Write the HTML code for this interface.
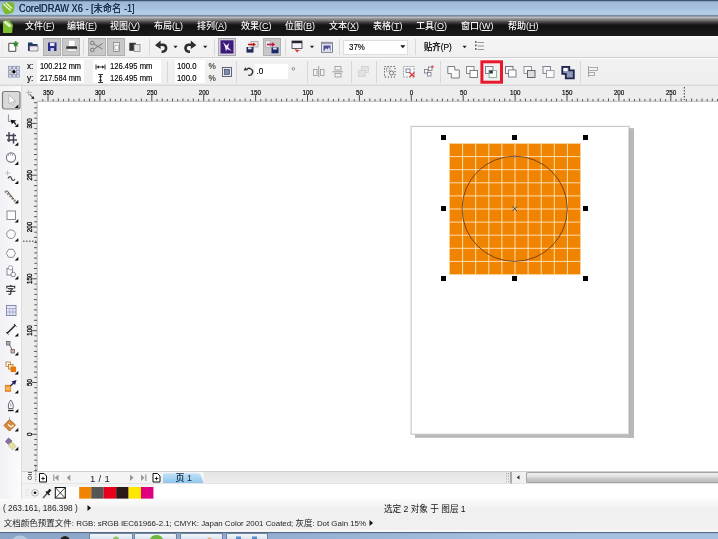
<!DOCTYPE html>
<html><head><meta charset="utf-8">
<title>CorelDRAW X6</title>
<style>
html,body{margin:0;padding:0;background:#fff;}
body{width:718px;height:539px;overflow:hidden;position:relative;will-change:transform;font-family:"Liberation Sans","Noto Sans CJK SC",sans-serif;font-size:9px;color:#222;}
.a{position:absolute;}
svg{position:absolute;overflow:visible;}
#title{left:0;top:0;width:718px;height:16px;background:linear-gradient(#3d5474 0,#6c88a8 1px,#9eb9d6 2px,#a6c1de 8px,#b6d0ea 14px,#a4bcd6 15px,#4c5c72 16px);}
#title .edge{left:0;top:0;width:718px;height:1px;background:#3d5474;}
#title .t{left:19px;top:1px;font-size:10.5px;color:#172e4c;text-shadow:0 0 0.4px #172e4c;line-height:14px;white-space:nowrap;transform-origin:0 0;transform:scaleX(0.88);}
#menu{left:0;top:16px;width:718px;height:20px;background:linear-gradient(#56657a 0,#d4d4d4 1px,#a2a2a2 2px,#7a7a7a 4px,#474747 6px,#1c1c1c 8.5px,#121212 10px,#1a1a1a 19px,#1a1a1a 20px);}
#menu span{position:absolute;top:4.3px;font-size:9px;color:#fafafa;line-height:13px;white-space:nowrap;font-weight:500;}
#tb1{left:0;top:36px;width:718px;height:21px;background:linear-gradient(#fdfdfd 0,#f4f4f4 3px,#f0f0f0 100%);}
#tb1line{left:0;top:57px;width:718px;height:1px;background:#d2d2d2;}
#tb2{left:0;top:58px;width:718px;height:28px;background:linear-gradient(#fbfbfb 0,#f1f1f1 2px,#eeeeee 26px,#d8d8d8 27.5px,#e4e4e4 28px);}
#toolbox{left:0;top:86px;width:21px;height:414px;background:linear-gradient(90deg,#f1f1f6,#fcfcfc);border-right:1px solid #dcdcdc;}
#hruler{left:22px;top:86px;width:696px;height:16px;background:#ededed;}
#vruler{left:22px;top:101px;width:16px;height:371px;background:#ededed;}
#canvas{left:37.5px;top:101.5px;width:681px;height:370px;background:#fff;overflow:hidden;}
#nav{left:22px;top:472px;width:696px;height:12px;background:#f4f4f4;}
#pal{left:22px;top:484px;width:696px;height:15px;background:#fff;}
#status{left:0;top:499px;width:718px;height:32px;background:linear-gradient(#fbfbfb 0,#f6f6f6 5px,#f0f0f0 9px,#f0f0f0 29px,#f4ecec 30px,#f8f8f8 31px);}
#task{left:0;top:531px;width:718px;height:8px;background:linear-gradient(#f4f4f4 0,#f4f4f4 0.8px,#5a6c86 1.2px,#5a6c86 2px,rgba(120,150,190,0) 2.6px),linear-gradient(90deg,#8ba6c8 0,#93aed0 270px,#a4bfdf 500px,#a6c1e0 718px);}
.btn{position:absolute;top:38px;height:15.6px;width:15.8px;background:#c8c8c8;border:1px solid #b0b0b0;box-sizing:content-box;}
.sep{position:absolute;width:1px;background:#d8d8d8;}
.inp{position:absolute;background:#fff;}
.pt{position:absolute;font-size:8.2px;line-height:10px;color:#161616;white-space:nowrap;text-shadow:0 0 0.35px rgba(0,0,0,.6);}
.sx{transform-origin:0 50%;}
.sw{position:absolute;top:3px;height:12px;width:12.4px;}
.tbtn{position:absolute;height:7px;background:linear-gradient(#f2f6fa,#d6e2ef);border:1px solid #6f839b;border-bottom:none;border-radius:2px 2px 0 0;box-sizing:border-box;}
</style></head>
<body>
<div id="title" class="a"><div class="a edge"></div>
<svg style="left:1px;top:1px" width="16" height="15" viewBox="0 0 16 15"><path d="M1.500 2.500Q6 0 12.500 1.500Q14.500 6 12 11.500Q8 14 4 13Q0 8 1.500 2.500Z" fill="#7dbb2c"/><path d="M2.500 3l7 6.500M5 2l6 5.500" stroke="#eef8d0" stroke-width="1.400" fill="none"/></svg>
<div class="a t">CorelDRAW X6 - [未命名 -1]</div></div>
<div id="menu" class="a">
<svg style="left:2px;top:3px" width="12" height="15" viewBox="0 0 12 15"><path d="M1 2 L7 1 L11 6 L10 14 L1 14 Z" fill="#7cc030"/><path d="M2 3 L8 8 M3 2 L9 7" stroke="#f0f8e0" stroke-width="1.2"/></svg>
<span style="left:25px">文件(<u>F</u>)</span>
<span style="left:67px">编辑(<u>E</u>)</span>
<span style="left:110px">视图(<u>V</u>)</span>
<span style="left:154px">布局(<u>L</u>)</span>
<span style="left:197px">排列(<u>A</u>)</span>
<span style="left:241px">效果(<u>C</u>)</span>
<span style="left:285px">位图(<u>B</u>)</span>
<span style="left:329px">文本(<u>X</u>)</span>
<span style="left:373px">表格(<u>T</u>)</span>
<span style="left:416px">工具(<u>O</u>)</span>
<span style="left:461px">窗口(<u>W</u>)</span>
<span style="left:508px">帮助(<u>H</u>)</span>
</div>
<div id="tb1" class="a"></div><div id="tb1line" class="a"></div><div id="tb2" class="a"></div>
<div class="btn" style="left:43px"></div>
<div class="btn" style="left:62px"></div>
<div class="btn" style="left:88px"></div>
<div class="btn" style="left:107px"></div>
<div class="btn" style="left:263px"></div>
<div class="sep" style="left:83px;top:39px;height:16px"></div>
<div class="sep" style="left:149px;top:39px;height:16px"></div>
<div class="sep" style="left:214px;top:39px;height:16px"></div>
<div class="sep" style="left:285px;top:39px;height:16px"></div>
<div class="sep" style="left:339px;top:39px;height:16px"></div>
<div class="sep" style="left:415px;top:39px;height:16px"></div>
<div class="inp" style="left:343px;top:40px;width:65px;height:15px;border:1px solid #dedede;box-sizing:border-box"></div>
<div class="pt sx" style="left:349px;top:42px;font-size:9px;transform:scaleX(.88)">37%</div>
<div class="pt sx" style="left:424px;top:41px;font-size:9px;line-height:12px;color:#111;font-weight:500;transform:scaleX(.93)">贴齐(P)</div><svg style="left:0;top:0" width="718" height="539" viewBox="0 0 718 539"><path d="M2.500 39v16" stroke="#e2e2ea" stroke-width="1" stroke-dasharray="1 1"/><path d="M8.8 43.3h4.2l2.800 2.500v5.500h-7z" fill="#fff" stroke="#4a4a4a" stroke-width="1"/><path d="M15.800 41l.8 1.800l1.900.2l-1.400 1.300l.4 1.900l-1.700-1l-1.700 1l.4-1.900l-1.400-1.300l1.900-.2z" fill="#2c8a2c" stroke="#2c8a2c" stroke-width="0.600"/><path d="M28 42.5h4l1 1.5h4.5v7h-9.5z" fill="#1f3766"/><path d="M29.5 46h8.5v5h-8.5z" fill="#e8e8f0" stroke="#555" stroke-width="0.6"/><rect x="48" y="42.5" width="8.5" height="8.5" fill="#2b2b8a"/><rect x="50" y="43" width="4.5" height="3" fill="#e8e8ff"/><rect x="50.5" y="48" width="3.5" height="3" fill="#c8c8e8"/><rect x="69" y="40.8" width="5.5" height="5.5" fill="#fff"/><rect x="66.3" y="46.3" width="10.7" height="2.6" fill="#333"/><rect x="67" y="49" width="9.4" height="2.3" fill="#f4f4f4" stroke="#999" stroke-width="0.4"/><g stroke="#7a7a7a" stroke-width="1" fill="none"><circle cx="92.3" cy="43" r="1.8"/><circle cx="92.3" cy="50" r="1.8"/><path d="M94 44l8.5 5M94 49l8.5-5.5"/></g><rect x="113.5" y="42.5" width="6" height="9" fill="#eee" stroke="#888" stroke-width="0.8"/><rect x="115" y="45.5" width="3.6" height="4.4" fill="#fff" stroke="#999" stroke-width="0.6"/><rect x="129.3" y="42.8" width="6.5" height="8" fill="#333"/><rect x="134" y="44.5" width="6" height="7" fill="#e4e4e4" stroke="#777" stroke-width="0.7"/><path d="M155 45.3l5.6-4.8v3h2.2c3 0 4.6 2 4.6 4.6s-1.8 4.8-4.8 4.8h-1v-2.4h0.8c1.600 0 2.300-1 2.300-2.400s-.8-2.200-2.300-2.200h-1.800v3.200z" fill="#2e2e2e"/><path d="M173.400 45.800h4.200l-2.100 2.400z" fill="#222"/><path d="M196.400 45.300l-5.600-4.800v3h-2c-3 0-4.600 2-4.600 4.600s1.800 4.800 4.800 4.800h1v-2.400h-.8c-1.600 0-2.300-1-2.300-2.400s.8-2.200 2.300-2.200h1.600v3.200z" fill="#2e2e2e"/><path d="M203.100 45.800h4.200l-2.100 2.400z" fill="#222"/><rect x="218.500" y="38.500" width="17" height="17" fill="#d5d0dc" stroke="#a8a4b0" stroke-width="1"/><rect x="220.500" y="40.300" width="13" height="13.200" fill="#3b1a7a"/><path d="M223 42l3.500 3.500l3-2.500l-1.500 4l3.500 4l-4.500-2l-1 2.500l-1-4.500z" fill="#f2e8ff"/><rect x="251" y="41.500" width="7" height="5.500" fill="#e8e8e8" stroke="#888" stroke-width="0.6"/><rect x="246.500" y="47" width="7" height="5.600" fill="#1f2a5a"/><rect x="248" y="47.300" width="3.600" height="2" fill="#dde"/><path d="M248 44.500h6" stroke="#c01818" stroke-width="1.600"/><path d="M253 42.500l3 2l-3 2z" fill="#c01818"/><rect x="265.500" y="40.500" width="5" height="7" fill="#e4e4e4" stroke="#999" stroke-width="0.5"/><rect x="271.500" y="47.300" width="7" height="6" fill="#1f2a6a"/><rect x="273" y="47.500" width="3.800" height="2" fill="#dde"/><path d="M267 44.500h6" stroke="#c01840" stroke-width="1.600"/><path d="M272 42.300l3.200 2.200l-3.200 2.200z" fill="#c01840"/><rect x="292" y="41" width="10" height="7.500" fill="#f2f2f8" stroke="#334" stroke-width="0.800"/><rect x="292" y="41" width="10" height="2.200" fill="#223"/><path d="M294.500 49l2.800 3.800l0.700-1.800l2.500-.5z" fill="#e0301c"/><path d="M309.900 45.800h4.200l-2.100 2.400z" fill="#222"/><rect x="321.500" y="42.300" width="11" height="10" fill="#e8e8f4" stroke="#667" stroke-width="0.800"/><rect x="321.500" y="42.300" width="11" height="1.800" fill="#99a"/><rect x="323.500" y="45.500" width="7" height="5.500" fill="#4a4a9a"/><path d="M324 51l2-3l1.500 1.500l1.500-2.500l1.500 4z" fill="#dde"/><path d="M400.300 45.300h5l-2.500 2.900z" fill="#111"/><path d="M462.500 45.800h4.200l-2.100 2.400z" fill="#222"/><g stroke="#8a8a8a" stroke-width="0.9"><path d="M477.500 42.500h6.500M477.500 46h6.500M477.500 49.500h6.500"/><path d="M475.800 41v10" stroke-dasharray="1.800 1.700" stroke="#555" stroke-width="1.500"/></g></svg>
<div class="pt" style="left:27px;top:62px">x:</div><div class="pt" style="left:27px;top:73.500px">y:</div>
<div class="inp" style="left:37px;top:60px;width:47px;height:23px"></div>
<div class="pt sx" style="left:40px;top:62px;transform:scaleX(.9)">100.212 mm</div><div class="pt sx" style="left:40px;top:73.500px;transform:scaleX(.9)">217.584 mm</div>
<div class="inp" style="left:92.500px;top:60px;width:68.500px;height:23px"></div>
<div class="pt sx" style="left:109.700px;top:62px;transform:scaleX(.93)">126.495 mm</div><div class="pt sx" style="left:109.700px;top:73.500px;transform:scaleX(.93)">126.495 mm</div>
<div class="sep" style="left:167px;top:61px;height:22px"></div>
<div class="inp" style="left:175px;top:60px;width:30px;height:23px"></div>
<div class="pt sx" style="left:177px;top:62px;transform:scaleX(.95)">100.0</div><div class="pt sx" style="left:177px;top:73.500px;transform:scaleX(.95)">100.0</div>
<div class="pt" style="left:208.500px;top:61.500px;color:#555">%</div><div class="pt" style="left:208.500px;top:73.500px;color:#555">%</div>
<div class="sep" style="left:236px;top:61px;height:22px"></div>
<div class="inp" style="left:255px;top:64px;width:32.500px;height:15px"></div>
<div class="pt" style="left:256.500px;top:66.500px">.0</div>
<div class="sep" style="left:307px;top:61px;height:22px"></div>
<div class="sep" style="left:351px;top:61px;height:22px"></div>
<div class="sep" style="left:376px;top:61px;height:22px"></div>
<div class="sep" style="left:440px;top:61px;height:22px"></div>
<div class="sep" style="left:580px;top:61px;height:22px"></div><svg style="left:0;top:0" width="718" height="539" viewBox="0 0 718 539"><rect x="8.5" y="66.3" width="2.800" height="2.800" fill="#dfe0ee" stroke="#8088ac" stroke-width="0.700"/><rect x="8.5" y="70.3" width="2.800" height="2.800" fill="#dfe0ee" stroke="#8088ac" stroke-width="0.700"/><rect x="8.5" y="74.3" width="2.800" height="2.800" fill="#dfe0ee" stroke="#8088ac" stroke-width="0.700"/><rect x="12.5" y="66.3" width="2.800" height="2.800" fill="#dfe0ee" stroke="#8088ac" stroke-width="0.700"/><circle cx="13.9" cy="71.7" r="1.700" fill="#000"/><rect x="12.5" y="74.3" width="2.800" height="2.800" fill="#dfe0ee" stroke="#8088ac" stroke-width="0.700"/><rect x="16.5" y="66.3" width="2.800" height="2.800" fill="#dfe0ee" stroke="#8088ac" stroke-width="0.700"/><rect x="16.5" y="70.3" width="2.800" height="2.800" fill="#dfe0ee" stroke="#8088ac" stroke-width="0.700"/><rect x="16.5" y="74.3" width="2.800" height="2.800" fill="#dfe0ee" stroke="#8088ac" stroke-width="0.700"/><path d="M96 64.500v5M105 64.500v5M96.500 67h8" stroke="#222" stroke-width="0.900" fill="none"/><path d="M97 67l2-1.700v3.400zM104 67l-2-1.700v3.400z" fill="#222"/><path d="M98 74.500h5M98 82.500h5M100.500 75v7" stroke="#222" stroke-width="0.900" fill="none"/><path d="M100.500 75l-1.700 2.200h3.400zM100.500 82l-1.700-2.200h3.400z" fill="#222"/><rect x="222.500" y="67.500" width="9" height="9" fill="#e8e8f4" stroke="#556" stroke-width="0.900"/><rect x="224.500" y="69.500" width="5" height="5" fill="#8088b8" stroke="#334" stroke-width="0.600"/><path d="M246.500 69.800a3.400 3.400 0 1 1 1.500 5.200" fill="none" stroke="#333" stroke-width="1.300"/><path d="M243.600 70.500l4.200-0.200l-2.600-3z" fill="#333"/><circle cx="293.300" cy="68.800" r="1.300" fill="none" stroke="#555" stroke-width="0.600"/><g fill="#f2f2f2" stroke="#999" stroke-width="0.800"><rect x="313.500" y="69.500" width="3.500" height="6"/><rect x="320.500" y="69.500" width="3.500" height="6"/><path d="M318.700 66v11" stroke="#888"/></g><g fill="#f2f2f2" stroke="#999" stroke-width="0.800"><rect x="335" y="66.500" width="6" height="3.500"/><rect x="335" y="73.500" width="6" height="3.500"/><path d="M332.500 71.800h10.500" stroke="#888"/></g><g fill="#e2e2e2" stroke="#d0d0d0" stroke-width="0.800"><rect x="361.500" y="66.500" width="7" height="6"/><rect x="358.500" y="70.500" width="7" height="6"/></g><rect x="384.500" y="66.500" width="10.500" height="10.500" fill="none" stroke="#444" stroke-width="1" stroke-dasharray="1.200 1.800"/><rect x="386.500" y="68" width="3.500" height="3" fill="#f4f4f4" stroke="#888" stroke-width="0.600"/><circle cx="391.500" cy="73" r="2" fill="#f8f8f8" stroke="#555" stroke-width="0.800"/><rect x="403.500" y="66.500" width="10.500" height="10.500" fill="#f4f8f8" stroke="#7a9a8a" stroke-width="0.800" stroke-dasharray="2 1"/><rect x="406" y="69" width="4" height="3.500" fill="#fafafa" stroke="#557" stroke-width="0.700"/><path d="M409.500 72.500l5 4.500m0-4.500l-5 4.500" stroke="#e03030" stroke-width="1.200"/><g fill="#fafafa" stroke="#667" stroke-width="0.700"><rect x="424.500" y="69.500" width="3.500" height="3.500"/><rect x="428.500" y="67" width="3.500" height="3.500"/><rect x="427.500" y="72.500" width="3.500" height="3.500"/></g><circle cx="432.500" cy="66.800" r="1.200" fill="#e05050"/><path d="M447.8 66.5h7v3.500h4.500v8h-8v-4.500h-3.500z" fill="#fafafa" stroke="#707070" stroke-width="0.900"/><rect x="466.5" y="66.5" width="7.500" height="7" fill="#fafafa" stroke="#808080" stroke-width="0.900"/><rect x="470.0" y="70.5" width="7.500" height="7" fill="#fff" stroke="#707070" stroke-width="0.900"/><rect x="485.5" y="66.5" width="7.500" height="7" fill="#f4f4fa" stroke="#778" stroke-width="0.900"/><rect x="489.0" y="70.5" width="7.500" height="7" fill="#f4faf4" stroke="#8a9" stroke-width="0.900"/><rect x="489.3" y="70.5" width="3.500" height="3" fill="#334"/><rect x="505.5" y="66.5" width="7.500" height="7" fill="#fafafa" stroke="#667" stroke-width="0.900"/><rect x="508.5" y="70.0" width="7.500" height="7" fill="#fff" stroke="#778" stroke-width="0.900"/><rect x="524.0" y="66.5" width="7.500" height="7" fill="#fafafa" stroke="#889" stroke-width="0.900"/><rect x="527.5" y="70.5" width="7.500" height="7" fill="#ddd" stroke="#556" stroke-width="0.900"/><rect x="543.0" y="66.5" width="7.500" height="7" fill="#f4f4f4" stroke="#778" stroke-width="0.900"/><rect x="546.5" y="70.5" width="7.500" height="7" fill="#fafafa" stroke="#99a" stroke-width="0.900"/><path d="M562.3 66.8h7v3.500h4.500v8h-8v-4.500h-3.500z" fill="#9098b8" stroke="#1c2450" stroke-width="1.800"/><rect x="563.5" y="68.0" width="4" height="3" fill="#fff"/><rect x="481.900" y="61.800" width="19.600" height="20.400" fill="none" stroke="#e8182c" stroke-width="3"/><g fill="#f2f2f2" stroke="#999" stroke-width="0.800"><path d="M588.500 66v11" /><rect x="588.500" y="67.500" width="9" height="3"/><rect x="588.500" y="72.500" width="6" height="3"/></g></svg>
<div id="toolbox" class="a"></div>
<div class="a" style="left:5.500px;top:283.500px;font-size:10.500px;line-height:13px;color:#444;font-weight:bold">字</div><svg style="left:0;top:0" width="718" height="539" viewBox="0 0 718 539"><rect x="2.500" y="91.500" width="17.500" height="17.500" rx="2" fill="#dadada" stroke="#7c7c7c" stroke-width="1.200"/><path d="M9 95v9l2.200-2l1.600 3.400l1.400-.7l-1.600-3.300h3z" fill="#fff" stroke="#aaa" stroke-width="0.700"/><path d="M18.300 104.5v3.600h-3.600z" fill="#111"/><path d="M8.500 114.500v7l3 0" stroke="#99a" stroke-width="1.200" fill="none"/><path d="M10.500 119.800l6 .6l-2 1.400l2 2.400l-1 .8l-2-2.400l-1.600 1.600z" fill="#111"/><path d="M18.300 123.5v3.600h-3.600z" fill="#111"/><path d="M9 132v10M13.500 133.500v10M6 135.500h10M7 140h10" stroke="#445" stroke-width="1.500" fill="none"/><path d="M18.300 142.2v3.600h-3.600z" fill="#111"/><circle cx="11" cy="157.500" r="4.600" fill="#fdfdff" stroke="#778" stroke-width="1.100"/><path d="M8.500 156v-2.500M10.500 155.500v-3M12.500 156v-2.500" stroke="#99a" stroke-width="0.800"/><path d="M18.300 161.3v3.600h-3.600z" fill="#111"/><path d="M7.500 170.500v5M5 173h5" stroke="#bbb" stroke-width="0.900"/><path d="M8 178.500c1.500-3 3-2 3.500 0s2 3 3.500 .5" stroke="#445" stroke-width="1.200" fill="none"/><path d="M18.300 180.5v3.600h-3.600z" fill="#111"/><path d="M5 191l10.500 10.500" stroke="#9a8878" stroke-width="2.400" stroke-dasharray="2 1.200"/><path d="M7 190.500l7 9" stroke="#555" stroke-width="1" /><path d="M18.300 199.8v3.600h-3.600z" fill="#111"/><rect x="7" y="211" width="8.500" height="8.500" fill="#fff" stroke="#8a8a90" stroke-width="1"/><path d="M18.300 219.0v3.600h-3.600z" fill="#111"/><circle cx="11" cy="234.200" r="4.300" fill="#fff" stroke="#8a8a90" stroke-width="1"/><path d="M18.300 238.0v3.600h-3.600z" fill="#111"/><path d="M6.300 253.300l2.300-4h4.600l2.300 4l-2.300 4h-4.600z" fill="#fff" stroke="#8a8a90" stroke-width="1"/><path d="M18.300 257.0v3.600h-3.600z" fill="#111"/><rect x="7" y="268.500" width="5.500" height="6.500" fill="#fff" stroke="#778" stroke-width="0.900"/><circle cx="10.500" cy="267.800" r="2.200" fill="#fff" stroke="#889" stroke-width="0.800"/><circle cx="13.200" cy="274.500" r="2.300" fill="#fff" stroke="#667" stroke-width="0.800"/><path d="M18.300 276.0v3.600h-3.600z" fill="#111"/><rect x="6.500" y="305.500" width="9.500" height="10" fill="#e8e8f6" stroke="#7880a8" stroke-width="0.900"/><path d="M6.500 308.500h9.500M9.700 308.500v7M12.800 308.500v7M6.500 312h9.500" stroke="#9098c0" stroke-width="0.700"/><path d="M7 333.500l8.500-8.500" stroke="#333" stroke-width="1.700"/><path d="M6 332l2.500 2.500M14 324l2.500 2.500" stroke="#333" stroke-width="1"/><path d="M18.300 333.0v3.600h-3.600z" fill="#111"/><rect x="6.500" y="341.500" width="3.500" height="3.500" fill="#aaa" stroke="#667" stroke-width="0.800"/><rect x="11" y="349.500" width="3.500" height="3.500" fill="#c8b8b0" stroke="#766" stroke-width="0.800"/><path d="M9.500 345l2.500 4.500" stroke="#666" stroke-width="1"/><path d="M18.300 352.0v3.600h-3.600z" fill="#111"/><rect x="6" y="362" width="4.500" height="4.500" fill="#fff" stroke="#b07830" stroke-width="0.800"/><rect x="8.500" y="364.500" width="4.500" height="4.500" fill="#fce0b0" stroke="#c07820" stroke-width="0.800"/><rect x="11" y="367" width="4.800" height="4.800" fill="#f07800" stroke="#d06800" stroke-width="0.600"/><path d="M18.300 371.0v3.600h-3.600z" fill="#111"/><rect x="5.200" y="385.200" width="5.600" height="6.200" fill="#f09020" stroke="#d07810" stroke-width="0.600"/><path d="M7 387v3M9 387v3" stroke="#fff" stroke-width="0.700"/><path d="M16.500 380l-5 1.500l3.500 3.500z" fill="#1c1c6a"/><path d="M10.500 386l3-3" stroke="#223" stroke-width="1.200"/><path d="M18.300 390.0v3.600h-3.600z" fill="#111"/><path d="M10.800 400c-2 2.500-2.800 5-2.300 8.500h4.600c.5-3.500-.3-6-2.300-8.500z" fill="#fff" stroke="#556" stroke-width="0.900"/><path d="M8 410.500h5.600" stroke="#222" stroke-width="1.400"/><path d="M10.800 403v4" stroke="#889" stroke-width="0.700"/><path d="M18.300 408.8v3.600h-3.600z" fill="#111"/><path d="M9.500 419.500l6 5.500l-6 6l-5.500-5.500z" fill="#d88838" stroke="#a86020" stroke-width="0.900"/><path d="M8 424.500l3 2.500l2.500-2" stroke="#fff" stroke-width="1.100" fill="none"/><path d="M9.500 417v4" stroke="#99a" stroke-width="0.800"/><path d="M18.300 427.8v3.600h-3.600z" fill="#111"/><path d="M8.500 438l3.500 3l-3.500 3.500l-3-3z" fill="#8870a0" stroke="#665080" stroke-width="0.700"/><path d="M8 445l4-3l4 4.500l-3.500 3.500z" fill="#e8e0a0" stroke="#b8c088" stroke-width="0.700"/><path d="M18.300 446.8v3.600h-3.600z" fill="#111"/></svg>
<div id="hruler" class="a"></div><div id="vruler" class="a"></div>
<div id="canvas" class="a"></div>
<svg style="left:0;top:0" width="718" height="539" viewBox="0 0 718 539"><rect x="415" y="431" width="219" height="6.800" fill="#b9b9b9"/><rect x="628" y="128.200" width="6" height="309.600" fill="#b9b9b9"/><rect x="411.100" y="126.400" width="218.100" height="307.800" fill="#fff" stroke="#c6c6c6" stroke-width="1.100"/><path d="M629.300 128v306.200" stroke="#a2a2a2" stroke-width="0.800"/><rect x="449.5" y="143.5" width="131" height="131" fill="#f08300"/><path d="M462.60 143.5V274.5M449.5 156.60H580.5M475.70 143.5V274.5M449.5 169.70H580.5M488.80 143.5V274.5M449.5 182.80H580.5M501.90 143.5V274.5M449.5 195.90H580.5M515.00 143.5V274.5M449.5 209.00H580.5M528.10 143.5V274.5M449.5 222.10H580.5M541.20 143.5V274.5M449.5 235.20H580.5M554.30 143.5V274.5M449.5 248.30H580.5M567.40 143.5V274.5M449.5 261.40H580.5" stroke="#ffe9c4" stroke-width="0.9" fill="none"/><rect x="449.5" y="143.5" width="131" height="131" fill="none" stroke="#ffd9a0" stroke-width="0.6"/><circle cx="514.7" cy="208.8" r="52.6" fill="none" stroke="#6b3a10" stroke-width="0.9"/><rect x="441" y="135" width="5" height="5" fill="#000"/><rect x="441" y="206" width="5" height="5" fill="#000"/><rect x="441" y="276" width="5" height="5" fill="#000"/><rect x="512" y="135" width="5" height="5" fill="#000"/><rect x="512" y="276" width="5" height="5" fill="#000"/><rect x="583" y="135" width="5" height="5" fill="#000"/><rect x="583" y="206" width="5" height="5" fill="#000"/><rect x="583" y="276" width="5" height="5" fill="#000"/><path d="M512.5 206.5l4.5 4.5m0 -4.5l-4.5 4.5" stroke="#33506e" stroke-width="1"/><circle cx="514.7" cy="156.5" r="1.3" fill="#8a7a9a"/></svg>
<svg style="left:0;top:0" width="718" height="539" viewBox="0 0 718 539" font-family="Liberation Sans, sans-serif" font-size="8" fill="#0a0a0a"><path d="M42.8 99.1V101.3M48.0 95.1V101.3M53.2 99.1V101.3M58.3 98.5V101.3M63.5 99.1V101.3M68.7 98.5V101.3M73.9 99.1V101.3M79.1 98.5V101.3M84.3 99.1V101.3M89.5 98.5V101.3M94.7 99.1V101.3M99.9 95.1V101.3M105.1 99.1V101.3M110.3 98.5V101.3M115.4 99.1V101.3M120.6 98.5V101.3M125.8 99.1V101.3M131.0 98.5V101.3M136.2 99.1V101.3M141.4 98.5V101.3M146.6 99.1V101.3M151.8 95.1V101.3M157.0 99.1V101.3M162.2 98.5V101.3M167.3 99.1V101.3M172.5 98.5V101.3M177.7 99.1V101.3M182.9 98.5V101.3M188.1 99.1V101.3M193.3 98.5V101.3M198.5 99.1V101.3M203.7 95.1V101.3M208.9 99.1V101.3M214.1 98.5V101.3M219.3 99.1V101.3M224.4 98.5V101.3M229.6 99.1V101.3M234.8 98.5V101.3M240.0 99.1V101.3M245.2 98.5V101.3M250.4 99.1V101.3M255.6 95.1V101.3M260.8 99.1V101.3M266.0 98.5V101.3M271.2 99.1V101.3M276.3 98.5V101.3M281.5 99.1V101.3M286.7 98.5V101.3M291.9 99.1V101.3M297.1 98.5V101.3M302.3 99.1V101.3M307.5 95.1V101.3M312.7 99.1V101.3M317.9 98.5V101.3M323.1 99.1V101.3M328.3 98.5V101.3M333.4 99.1V101.3M338.6 98.5V101.3M343.8 99.1V101.3M349.0 98.5V101.3M354.2 99.1V101.3M359.4 95.1V101.3M364.6 99.1V101.3M369.8 98.5V101.3M375.0 99.1V101.3M380.2 98.5V101.3M385.3 99.1V101.3M390.5 98.5V101.3M395.7 99.1V101.3M400.9 98.5V101.3M406.1 99.1V101.3M411.3 95.1V101.3M416.5 99.1V101.3M421.7 98.5V101.3M426.9 99.1V101.3M432.1 98.5V101.3M437.3 99.1V101.3M442.4 98.5V101.3M447.6 99.1V101.3M452.8 98.5V101.3M458.0 99.1V101.3M463.2 95.1V101.3M468.4 99.1V101.3M473.6 98.5V101.3M478.8 99.1V101.3M484.0 98.5V101.3M489.2 99.1V101.3M494.3 98.5V101.3M499.5 99.1V101.3M504.7 98.5V101.3M509.9 99.1V101.3M515.1 95.1V101.3M520.3 99.1V101.3M525.5 98.5V101.3M530.7 99.1V101.3M535.9 98.5V101.3M541.1 99.1V101.3M546.3 98.5V101.3M551.4 99.1V101.3M556.6 98.5V101.3M561.8 99.1V101.3M567.0 95.1V101.3M572.2 99.1V101.3M577.4 98.5V101.3M582.6 99.1V101.3M587.8 98.5V101.3M593.0 99.1V101.3M598.2 98.5V101.3M603.3 99.1V101.3M608.5 98.5V101.3M613.7 99.1V101.3M618.9 95.1V101.3M624.1 99.1V101.3M629.3 98.5V101.3M634.5 99.1V101.3M639.7 98.5V101.3M644.9 99.1V101.3M650.1 98.5V101.3M655.3 99.1V101.3M660.4 98.5V101.3M665.6 99.1V101.3M670.8 95.1V101.3M676.0 99.1V101.3M681.2 98.5V101.3M686.4 99.1V101.3M691.6 98.5V101.3M696.8 99.1V101.3M702.0 98.5V101.3M707.2 99.1V101.3M712.3 98.5V101.3M717.5 99.1V101.3" stroke="#3a3a3a" stroke-width="0.9" fill="none"/><path d="M37 101.3H718" stroke="#b0b0b0" stroke-width="0.8"/><text stroke="#0a0a0a" stroke-width="0.22" x="43.0" y="94.9" textLength="10.4" lengthAdjust="spacingAndGlyphs">350</text><text stroke="#0a0a0a" stroke-width="0.22" x="94.9" y="94.9" textLength="10.4" lengthAdjust="spacingAndGlyphs">300</text><text stroke="#0a0a0a" stroke-width="0.22" x="146.8" y="94.9" textLength="10.4" lengthAdjust="spacingAndGlyphs">250</text><text stroke="#0a0a0a" stroke-width="0.22" x="198.7" y="94.9" textLength="10.4" lengthAdjust="spacingAndGlyphs">200</text><text stroke="#0a0a0a" stroke-width="0.22" x="250.6" y="94.9" textLength="10.4" lengthAdjust="spacingAndGlyphs">150</text><text stroke="#0a0a0a" stroke-width="0.22" x="302.5" y="94.9" textLength="10.4" lengthAdjust="spacingAndGlyphs">100</text><text stroke="#0a0a0a" stroke-width="0.22" x="356.1" y="94.9" textLength="6.9" lengthAdjust="spacingAndGlyphs">50</text><text stroke="#0a0a0a" stroke-width="0.22" x="409.8" y="94.9" textLength="3.5" lengthAdjust="spacingAndGlyphs">0</text><text stroke="#0a0a0a" stroke-width="0.22" x="460.0" y="94.9" textLength="6.9" lengthAdjust="spacingAndGlyphs">50</text><text stroke="#0a0a0a" stroke-width="0.22" x="510.1" y="94.9" textLength="10.4" lengthAdjust="spacingAndGlyphs">100</text><text stroke="#0a0a0a" stroke-width="0.22" x="562.0" y="94.9" textLength="10.4" lengthAdjust="spacingAndGlyphs">150</text><text stroke="#0a0a0a" stroke-width="0.22" x="613.9" y="94.9" textLength="10.4" lengthAdjust="spacingAndGlyphs">200</text><text stroke="#0a0a0a" stroke-width="0.22" x="665.9" y="94.9" textLength="10.4" lengthAdjust="spacingAndGlyphs">250</text><path d="M34.4 470.6H37M34.0 465.4H37M34.4 460.2H37M34.0 455.0H37M34.4 449.8H37M34.0 444.7H37M34.4 439.5H37M32.2 434.3H37M34.4 429.1H37M34.0 423.9H37M34.4 418.8H37M34.0 413.6H37M34.4 408.4H37M34.0 403.2H37M34.4 398.0H37M34.0 392.8H37M34.4 387.7H37M32.2 382.5H37M34.4 377.3H37M34.0 372.1H37M34.4 366.9H37M34.0 361.8H37M34.4 356.6H37M34.0 351.4H37M34.4 346.2H37M34.0 341.0H37M34.4 335.8H37M32.2 330.7H37M34.4 325.5H37M34.0 320.3H37M34.4 315.1H37M34.0 309.9H37M34.4 304.8H37M34.0 299.6H37M34.4 294.4H37M34.0 289.2H37M34.4 284.0H37M32.2 278.8H37M34.4 273.7H37M34.0 268.5H37M34.4 263.3H37M34.0 258.1H37M34.4 252.9H37M34.0 247.7H37M34.4 242.6H37M34.0 237.4H37M34.4 232.2H37M32.2 227.0H37M34.4 221.8H37M34.0 216.7H37M34.4 211.5H37M34.0 206.3H37M34.4 201.1H37M34.0 195.9H37M34.4 190.7H37M34.0 185.6H37M34.4 180.4H37M32.2 175.2H37M34.4 170.0H37M34.0 164.8H37M34.4 159.7H37M34.0 154.5H37M34.4 149.3H37M34.0 144.1H37M34.4 138.9H37M34.0 133.7H37M34.4 128.6H37M32.2 123.4H37M34.4 118.2H37M34.0 113.0H37M34.4 107.8H37M34.0 102.7H37" stroke="#3a3a3a" stroke-width="0.9" fill="none"/><path d="M37.1 101V472" stroke="#b0b0b0" stroke-width="0.8"/><text font-size="7.300" stroke="#0a0a0a" stroke-width="0.3" transform="translate(32.2 436.0) rotate(-90)" textLength="3.5" lengthAdjust="spacingAndGlyphs">0</text><text font-size="7.300" stroke="#0a0a0a" stroke-width="0.3" transform="translate(32.2 385.9) rotate(-90)" textLength="6.9" lengthAdjust="spacingAndGlyphs">50</text><text font-size="7.300" stroke="#0a0a0a" stroke-width="0.3" transform="translate(32.2 335.8) rotate(-90)" textLength="10.4" lengthAdjust="spacingAndGlyphs">100</text><text font-size="7.300" stroke="#0a0a0a" stroke-width="0.3" transform="translate(32.2 284.0) rotate(-90)" textLength="10.4" lengthAdjust="spacingAndGlyphs">150</text><text font-size="7.300" stroke="#0a0a0a" stroke-width="0.3" transform="translate(32.2 232.2) rotate(-90)" textLength="10.4" lengthAdjust="spacingAndGlyphs">200</text><text font-size="7.300" stroke="#0a0a0a" stroke-width="0.3" transform="translate(32.2 180.4) rotate(-90)" textLength="10.4" lengthAdjust="spacingAndGlyphs">250</text><text font-size="7.300" stroke="#0a0a0a" stroke-width="0.3" transform="translate(32.2 128.6) rotate(-90)" textLength="10.4" lengthAdjust="spacingAndGlyphs">300</text><path d="M28.500 90.500v5M26.500 92.500h6" stroke="#888" stroke-width="0.800" stroke-dasharray="1.200 0.800" fill="none"/><path d="M29.500 94l3.500 3.800" stroke="#333" stroke-width="1" fill="none"/><path d="M34.300 99.300l-3.400-.8l2.600-2.600z" fill="#222"/><path d="M684.3 87V100" stroke="#333" stroke-width="1" stroke-dasharray="1.5 1.5"/><path d="M23 241.2H37" stroke="#333" stroke-width="1" stroke-dasharray="1.5 1.5"/></svg>
<div id="nav" class="a"></div>
<div class="a" style="left:22px;top:471px;width:696px;height:1px;background:#cfcfcf"></div>
<div class="a" style="left:204px;top:472px;width:307px;height:11px;background:linear-gradient(#e4e4e4,#ededed)"></div>
<div class="a" style="left:22px;top:483px;width:696px;height:1px;background:#e4e4e4"></div>
<div class="a" style="left:90px;top:472.500px;font-size:9.500px;line-height:11px;color:#222;white-space:nowrap;letter-spacing:0.300px">1 / 1</div>
<div class="a" style="left:512px;top:472px;width:14px;height:11px;background:#f0f0f0"></div>
<div class="a" style="left:526px;top:472px;width:192px;height:11px;border:1px solid #a4a4a4;border-right:none;border-radius:2px 0 0 2px;box-sizing:border-box;background:linear-gradient(#eeeeee 0,#e2e2e2 40%,#cacaca 60%,#bcbcbc 100%)"></div><svg style="left:0;top:0" width="718" height="539" viewBox="0 0 718 539"><path d="M28 472.500h4M28 474.500h4" stroke="#555" stroke-width="0.900"/><circle cx="29.800" cy="477.800" r="1.800" fill="none" stroke="#555" stroke-width="0.900"/><path d="M35.800 466v16" stroke="#666" stroke-width="0.900" stroke-dasharray="1.300 1.300"/><path d="M39.5 473.500h4.500l2.500 2.500v6h-7z" fill="#fff" stroke="#111" stroke-width="1"/><path d="M41.3 478.500h3.500M43.0 476.800v3.400" stroke="#111" stroke-width="0.900"/><path d="M153.0 473.500h4.500l2.500 2.500v6h-7z" fill="#fff" stroke="#111" stroke-width="1"/><path d="M154.8 478.500h3.500M156.5 476.800v3.400" stroke="#111" stroke-width="0.900"/><path d="M53.800 474.500v6.500" stroke="#999" stroke-width="1.200"/><path d="M58.500 474.500v6.500l-3.800-3.250z" fill="#999"/><path d="M70.300 474.500v6.500l-3.600-3.250z" fill="#999"/><path d="M130 474.500v6.500l3.600-3.250z" fill="#999"/><path d="M141 474.500v6.500l3.600-3.250z" fill="#999"/><path d="M145.800 474.500v6.500" stroke="#999" stroke-width="1.200"/><defs><linearGradient id="tg" x1="0" y1="0" x2="0" y2="1"><stop offset="0" stop-color="#c4e2f7"/><stop offset="1" stop-color="#8fc6eb"/></linearGradient></defs><path d="M163 483v-8.300q0-1.500 1.500-1.500h33.500q2 0 3 2.800l2.600 7z" fill="url(#tg)"/><path d="M506.500 473v10M508.500 473v10" stroke="#aaa" stroke-width="0.900" stroke-dasharray="1.200 1.500"/><path d="M511 472v11.500" stroke="#666" stroke-width="1"/><path d="M519.500 475.300v4.200l-2.800-2.100z" fill="#333"/></svg><div class="a" style="left:175.500px;top:472.500px;font-size:9px;line-height:11px;color:#10283f;font-weight:500;white-space:nowrap">页 1</div>
<div id="pal" class="a"></div>
<div class="a" style="left:22px;top:484px;width:132px;height:15px;background:#f3f3f3"></div>
<div class="a" style="left:0;top:499px;width:718px;height:1px;background:#dcdcdc"></div><svg style="left:0;top:0" width="718" height="539" viewBox="0 0 718 539"><rect x="65.5" y="487" width="13.7" height="11.600" fill="#ffffff"/><rect x="79.2" y="487" width="12.1" height="11.600" fill="#f08300"/><rect x="91.3" y="487" width="12.4" height="11.600" fill="#555555"/><rect x="103.7" y="487" width="12.5" height="11.600" fill="#e6001c"/><rect x="116.2" y="487" width="12.4" height="11.600" fill="#2a1916"/><rect x="128.6" y="487" width="12.4" height="11.600" fill="#ffe800"/><rect x="141.0" y="487" width="12.4" height="11.600" fill="#e0007f"/><rect x="55.300" y="487.500" width="10" height="10.600" fill="#fff" stroke="#111" stroke-width="1"/><path d="M55.500 487.700l9.600 10.200M65.100 487.700l-9.600 10.200" stroke="#111" stroke-width="0.800"/><circle cx="35" cy="492.800" r="3.300" fill="#fff" stroke="#aaa" stroke-width="0.900"/><circle cx="35" cy="492.800" r="1.400" fill="#111"/><path d="M26 489v8M28 489v8" stroke="#ddd" stroke-width="0.900" stroke-dasharray="1 1"/><path d="M43 498l4.500-5" stroke="#555" stroke-width="1.500"/><path d="M46 491.500l3.500 3.500" stroke="#222" stroke-width="1.600"/><path d="M47.500 493l3-3.500" stroke="#222" stroke-width="2.600"/></svg>
<div id="status" class="a"></div>
<div class="a" style="left:3px;top:503px;font-size:8.300px;line-height:11px;color:#222;white-space:nowrap">( 263.161, 186.398 )</div>
<div class="a" style="left:384px;top:502.500px;font-size:8.600px;line-height:12px;color:#111;white-space:nowrap">选定 2 对象 于 图层 1</div>
<div class="a" style="left:3.800px;top:517px;font-size:7.900px;line-height:12px;color:#222;white-space:nowrap"><span style="font-size:8.500px">文档颜色预置文件</span>: RGB: sRGB IEC61966-2.1; CMYK: Japan Color 2001 Coated; <span style="font-size:8.500px">灰度</span>: Dot Gain 15%</div><svg style="left:0;top:0" width="718" height="539" viewBox="0 0 718 539"><path d="M87.500 505v6l3.600-3z" fill="#111"/><path d="M369.500 520v6l3.600-3z" fill="#111"/></svg>
<div id="task" class="a"></div>
<div class="tbtn" style="left:89.0px;top:533px;width:43.5px"></div>
<div class="tbtn" style="left:134.4px;top:533px;width:42.5px"></div>
<div class="tbtn" style="left:179.7px;top:533px;width:43.5px"></div>
<div class="tbtn" style="left:225.9px;top:533px;width:42.5px"></div><svg style="left:0;top:0" width="718" height="539" viewBox="0 0 718 539"><ellipse cx="20" cy="541" rx="7.500" ry="5.500" fill="#b4c8e0"/><ellipse cx="65" cy="541.500" rx="5" ry="5.500" fill="#202428"/><ellipse cx="116" cy="539.500" rx="3" ry="3" fill="#8cc860"/><ellipse cx="156.500" cy="540" rx="6.500" ry="5" fill="#6cb83c"/><circle cx="209.500" cy="539.500" r="2" fill="#e8a860"/><rect x="236" y="536.500" width="5" height="2.500" fill="#5a8cd0"/><rect x="252" y="536.500" width="5" height="2.500" fill="#5a8cd0"/></svg>
</body></html>
